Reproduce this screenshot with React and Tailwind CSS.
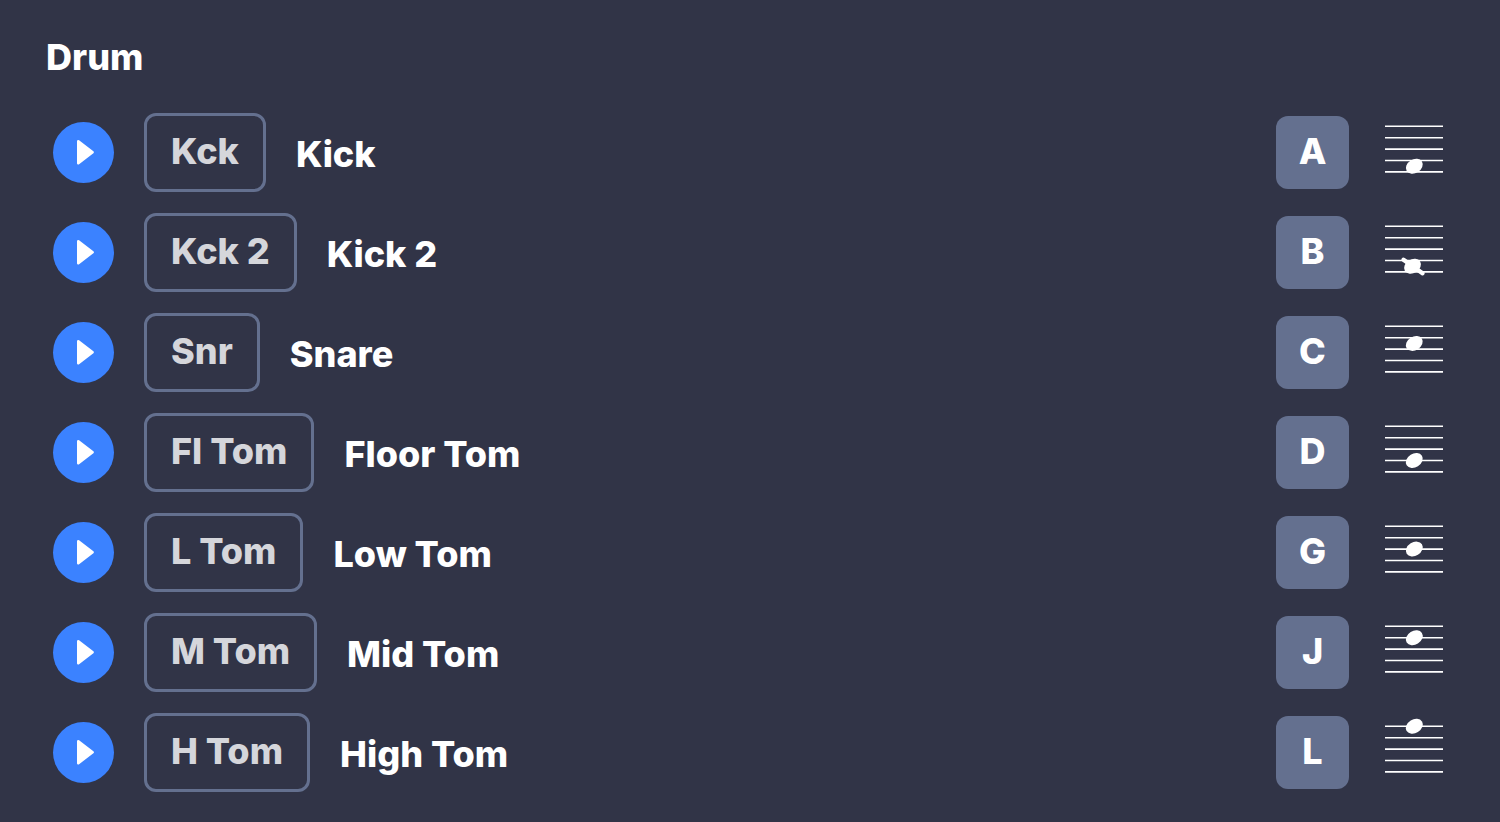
const DRUMS = [
  { short: "Kck", name: "Kick", key: "A", step: 7 },
  { short: "Kck 2", name: "Kick 2", key: "B", step: 7, crossed: true },
  { short: "Snr", name: "Snare", key: "C", step: 3 },
  { short: "Fl Tom", name: "Floor Tom", key: "D", step: 6 },
  { short: "L Tom", name: "Low Tom", key: "G", step: 4 },
  { short: "M Tom", name: "Mid Tom", key: "J", step: 2 },
  { short: "H Tom", name: "High Tom", key: "L", step: 0 },
];

const LINE_GAP = 11.4;

// step counts half line gaps down from the top line
const Staff = ({ step, crossed }) => {
  const x = crossed ? 27.5 : 29.3;
  const y = 10.3 + (step * LINE_GAP) / 2;
  return (
    <svg width="58" height="66" viewBox="0 0 58 66" className="block shrink-0" aria-hidden="true">
      {[0, 1, 2, 3, 4].map((i) => (
        <path key={i} d={`M0 ${10.3 + i * LINE_GAP}H58`} stroke="#fff" strokeWidth="1.6" />
      ))}
      <ellipse cx={x} cy={y} rx="9" ry="6.8" fill="#fff" transform={`rotate(-32 ${x} ${y})`} />
      {crossed && (
        <path
          d={`M${x - 9} ${y - 6.5}L${x + 10} ${y + 7}`}
          stroke="#fff"
          strokeWidth="4.4"
          strokeLinecap="round"
        />
      )}
    </svg>
  );
};

const PlayButton = ({ name }) => (
  <button
    type="button"
    aria-label={`Play ${name}`}
    className="w-[61px] h-[61px] rounded-full bg-[#3b82ff] flex items-center justify-center shrink-0 cursor-pointer"
  >
    <svg width="61" height="61" viewBox="0 0 61 61" aria-hidden="true">
      <path
        d="M25.3 19.3L39.6 30.2L25.3 41.2Z"
        fill="#fff"
        stroke="#fff"
        strokeWidth="2.6"
        strokeLinejoin="round"
      />
    </svg>
  </button>
);

const DrumRow = ({ short, name, shortcut, step, crossed }) => (
  <li className="flex items-center">
    <PlayButton name={name} />
    <button
      type="button"
      className="ml-[30px] h-[79px] px-6 pb-[3px] rounded-xl border-3 border-[#64708f] text-[#d5d6db] font-extrabold whitespace-nowrap cursor-pointer"
    >
      {short}
    </button>
    <span className="ml-[30px] pt-[3px] whitespace-nowrap">{name}</span>
    <kbd className="ml-auto w-[73px] h-[73px] pb-[3px] rounded-xl bg-[#64708f] font-[Inter,sans-serif] text-[36px] flex items-center justify-center shrink-0">
      {shortcut}
    </kbd>
    <div className="ml-9 pb-2">
      <Staff step={step} crossed={crossed} />
    </div>
  </li>
);

const App = () => (
  <main className="min-h-screen bg-[#313447] text-white font-[Inter,sans-serif] font-extrabold text-[36px] leading-[46px] pt-[34px] pb-[30px]">
    <h2 className="pl-[46px]">Drum</h2>
    <ul className="mt-[33px] pl-[53px] pr-[57px] flex flex-col gap-[21px]">
      {DRUMS.map(({ key, ...drum }) => (
        <DrumRow key={key} shortcut={key} {...drum} />
      ))}
    </ul>
  </main>
);

export default App;
